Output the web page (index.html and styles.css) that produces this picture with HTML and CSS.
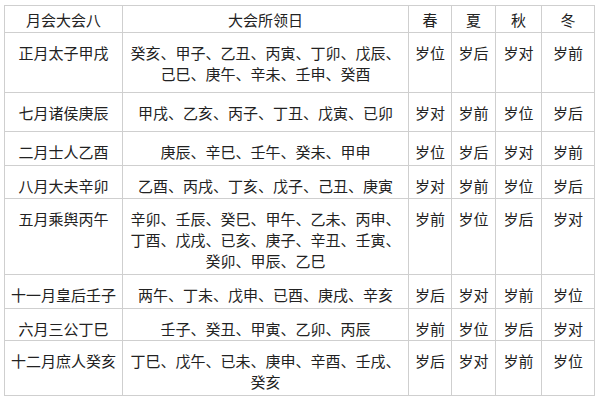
FILE: index.html
```html
<!DOCTYPE html>
<html lang="zh">
<head>
<meta charset="utf-8">
<title>大会所领日</title>
<link rel="stylesheet" href="styles.css">
</head>
<body>
<table class="tbl">
  <colgroup>
    <col class="c-name">
    <col class="c-days">
    <col class="c-s1">
    <col class="c-s2">
    <col class="c-s3">
    <col class="c-s4">
  </colgroup>
  <thead>
    <tr class="h">
      <th>月会大会八</th>
      <th>大会所领日</th>
      <th>春</th>
      <th>夏</th>
      <th>秋</th>
      <th>冬</th>
    </tr>
  </thead>
  <tbody>
    <tr class="r1">
      <td>正月太子甲戌</td>
      <td>癸亥、甲子、乙丑、丙寅、丁卯、戊辰、己巳、庚午、辛未、壬申、癸酉</td>
      <td>岁位</td><td>岁后</td><td>岁对</td><td>岁前</td>
    </tr>
    <tr class="r2">
      <td>七月诸侯庚辰</td>
      <td>甲戌、乙亥、丙子、丁丑、戊寅、已卯</td>
      <td>岁对</td><td>岁前</td><td>岁位</td><td>岁后</td>
    </tr>
    <tr class="r3">
      <td>二月士人乙酉</td>
      <td>庚辰、辛巳、壬午、癸未、甲申</td>
      <td>岁位</td><td>岁后</td><td>岁对</td><td>岁前</td>
    </tr>
    <tr class="r4">
      <td>八月大夫辛卯</td>
      <td>乙酉、丙戌、丁亥、戊子、己丑、庚寅</td>
      <td>岁对</td><td>岁前</td><td>岁位</td><td>岁后</td>
    </tr>
    <tr class="r5">
      <td>五月乘舆丙午</td>
      <td>辛卯、壬辰、癸巳、甲午、乙未、丙申、丁酉、戊戌、已亥、庚子、辛丑、壬寅、癸卯、甲辰、乙巳</td>
      <td>岁前</td><td>岁位</td><td>岁后</td><td>岁对</td>
    </tr>
    <tr class="r6">
      <td>十一月皇后壬子</td>
      <td>两午、丁未、戊申、已酉、庚戌、辛亥</td>
      <td>岁后</td><td>岁对</td><td>岁前</td><td>岁位</td>
    </tr>
    <tr class="r7">
      <td>六月三公丁巳</td>
      <td>壬子、癸丑、甲寅、乙卯、丙辰</td>
      <td>岁前</td><td>岁位</td><td>岁后</td><td>岁对</td>
    </tr>
    <tr class="r8">
      <td>十二月庶人癸亥</td>
      <td>丁巳、戊午、已未、庚申、辛酉、壬戌、癸亥</td>
      <td>岁后</td><td>岁对</td><td>岁前</td><td>岁位</td>
    </tr>
  </tbody>
</table>
</body>
</html>
```
FILE: styles.css
```css
html, body {
  margin: 0;
  background: #ffffff;
}
body {
  padding: 5px 0 0 4px;
  font-family: "Noto Sans CJK SC", "Noto Sans", sans-serif;
  font-size: 15px;
  color: #222222;
}
.tbl {
  border-collapse: collapse;
  table-layout: fixed;
  width: 590px;
}
.c-name { width: 118px; }
.c-days { width: 286px; }
.c-s1 { width: 43px; }
.c-s2 { width: 44px; }
.c-s3 { width: 46px; }
.c-s4 { width: 53px; }
.tbl th,
.tbl td {
  border: 1px solid #cfcfcf;
  text-align: center;
  line-height: 21px;
  padding: 0 3px;
  font-weight: normal;
}
.tbl th {
  vertical-align: middle;
}
.tbl td {
  vertical-align: top;
  padding-top: 9px;
}
.tbl td:nth-child(2) {
  padding-left: 5px;
  padding-right: 5px;
}
.h  { height: 27px; }
.r1 { height: 60px; }
.r2 { height: 39px; }
.r3 { height: 34px; }
.r4 { height: 33px; }
.r5 { height: 76px; }
.r6 { height: 34px; }
.r7 { height: 32px; }
.r8 { height: 55px; }
```
